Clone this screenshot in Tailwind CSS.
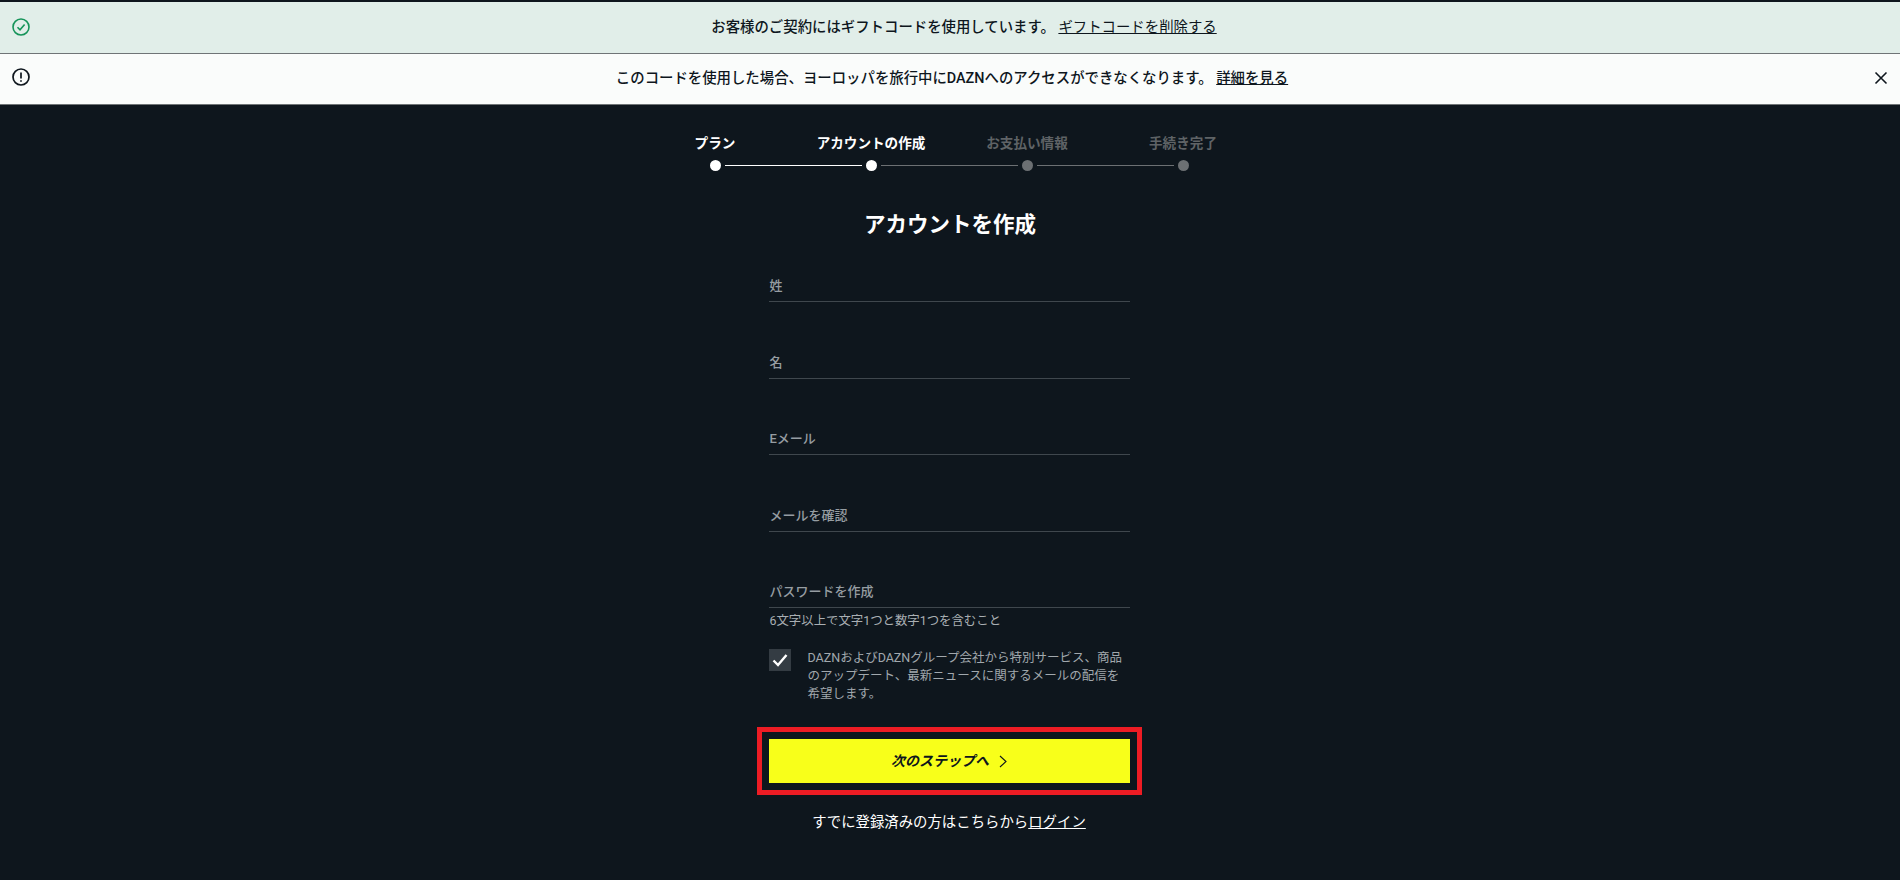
<!DOCTYPE html>
<html lang="ja">
<head>
<meta charset="utf-8">
<script src="https://cdn.jsdelivr.net/npm/@tailwindcss/browser@4"></script>
</head>
<body class="bg-[#0e161d] font-['Roboto','Noto_Sans_CJK_JP',sans-serif] h-[880px] overflow-hidden">
<div class="pt-[2px]">
  <div class="h-[52px] bg-[#e1eee9] border-b border-[#6f7476] flex items-center px-[12px] relative">
    <svg class="w-[18px] h-[18px] shrink-0 -translate-y-[1px]" viewBox="0 0 18 18" fill="none" stroke="#16945a" stroke-width="1.6"><circle cx="9" cy="9" r="8"/><path d="M5.5 9.2l2.5 2.6 4.6-5.4"/></svg>
    <p class="flex-1 text-center text-[14.4px] leading-5 text-[#0e161d] font-medium pl-[10px]">お客様のご契約にはギフトコードを使用しています。 <a class="underline font-normal">ギフトコードを削除する</a></p>
  </div>
  <div class="h-[51px] bg-[#fafcfb] border-b border-[#6f7476] flex items-center px-[12px]">
    <svg class="w-[18px] h-[18px] shrink-0 -translate-y-[2px]" viewBox="0 0 18 18" fill="none" stroke="#0e161d" stroke-width="1.7"><circle cx="9" cy="9" r="8"/><path d="M9 4.5v6M9 12.2v1.5"/></svg>
    <p class="flex-1 text-center text-[14.4px] leading-5 text-[#0e161d] font-medium">このコードを使用した場合、ヨーロッパを旅行中にDAZNへのアクセスができなくなります。 <a class="underline">詳細を見る</a></p>
    <svg class="w-[14px] h-[14px] shrink-0 -translate-y-[1px]" viewBox="0 0 14 14" fill="none" stroke="#0e161d" stroke-width="1.6"><path d="M1.5 1.5l11 11M12.5 1.5l-11 11"/></svg>
  </div>
</div>
<main class="w-[624px] mx-auto pt-[28px] -translate-x-[1px]">
  <div class="grid grid-cols-4 text-center text-[13.6px] leading-5 font-bold">
    <span class="text-white">プラン</span>
    <span class="text-white">アカウントの作成</span>
    <span class="text-[#5f6366]">お支払い情報</span>
    <span class="text-[#5f6366]">手続き完了</span>
  </div>
  <div class="flex items-center w-[479px] mx-auto mt-[7px]">
    <span class="w-[11px] h-[11px] rounded-full bg-white shrink-0"></span>
    <span class="flex-1 h-px bg-white mx-[4px]"></span>
    <span class="w-[11px] h-[11px] rounded-full bg-white shrink-0"></span>
    <span class="flex-1 h-px bg-[#6c7073] mx-[4px]"></span>
    <span class="w-[11px] h-[11px] rounded-full bg-[#6c7073] shrink-0"></span>
    <span class="flex-1 h-px bg-[#6c7073] mx-[4px]"></span>
    <span class="w-[11px] h-[11px] rounded-full bg-[#6c7073] shrink-0"></span>
  </div>
  <h1 class="text-center text-[21.5px] leading-7 font-bold text-white mt-[40px] translate-x-[1px]">アカウントを作成</h1>
</main>
<form class="w-[361px] mx-auto mt-[23px] translate-x-[-1px]">
  <div class="h-[40px] flex items-end pb-[6px] pl-[1px] border-b border-[#3f474d] text-[13px] font-medium text-[#969da2]">姓</div>
  <div class="h-[40px] mt-[37px] flex items-end pb-[6px] pl-[1px] border-b border-[#3f474d] text-[13px] font-medium text-[#969da2]">名</div>
  <div class="h-[40px] mt-[36px] flex items-end pb-[6px] pl-[1px] border-b border-[#3f474d] text-[13px] font-medium text-[#969da2]">Eメール</div>
  <div class="h-[40px] mt-[37px] flex items-end pb-[6px] pl-[1px] border-b border-[#3f474d] text-[13px] font-medium text-[#969da2]">メールを確認</div>
  <div class="h-[40px] mt-[36px] flex items-end pb-[6px] pl-[1px] border-b border-[#3f474d] text-[13px] font-medium text-[#969da2]">パスワードを作成</div>
  <p class="text-[12.4px] leading-[18px] text-[#a9afb3] mt-[4px] pl-[1px]">6文字以上で文字1つと数字1つを含むこと</p>
  <label class="flex mt-[19px]">
    <span class="w-[22px] h-[22px] bg-[#343c43] flex items-center justify-center shrink-0">
      <svg class="w-[16px] h-[14px]" viewBox="0 0 16 14" fill="none" stroke="#fff" stroke-width="2.4"><path d="M1.5 7.5l4.5 4.5L14.5 2"/></svg>
    </span>
    <span class="ml-[17px] text-[12.5px] leading-[18px] text-[#a1a8ad]">DAZNおよびDAZNグループ会社から特別サービス、商品のアップデート、最新ニュースに関するメールの配信を希望します。</span>
  </label>
  <button type="button" class="w-full h-[44px] mt-[36px] bg-[#f8ff1a] flex items-center justify-center gap-[10px] text-[14px] font-bold italic text-[#0e161d] outline-[5px] outline-[#ed1c24] outline-offset-[7px]">
    次のステップへ
    <svg class="w-[8px] h-[13px]" viewBox="0 0 8 13" fill="none" stroke="#0e161d" stroke-width="1.1"><path d="M1 1l6 5.5L1 12"/></svg>
  </button>
  <p class="text-center text-[14.4px] leading-5 text-white mt-[30px]">すでに登録済みの方はこちらから<a class="underline">ログイン</a></p>
</form>
</body>
</html>
